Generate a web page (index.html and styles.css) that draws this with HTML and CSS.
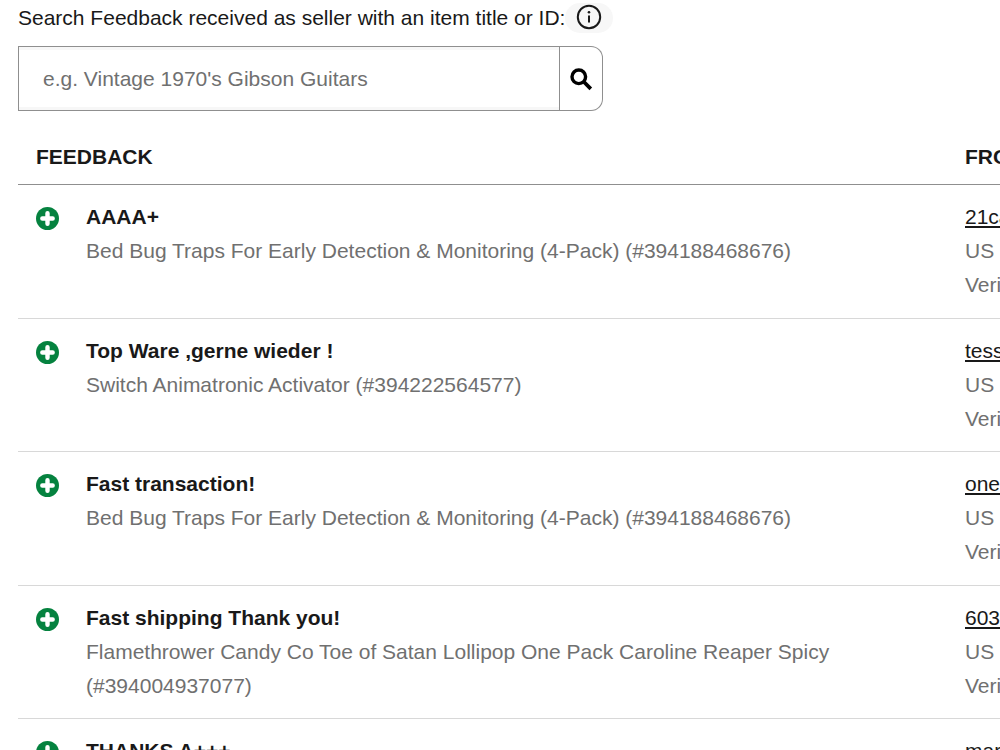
FILE: index.html
```html
<!DOCTYPE html>
<html lang="en">
<head>
    <meta charset="UTF-8">
    <meta name="viewport" content="width=device-width, initial-scale=1.0">
    <title>Feedback profile</title>
    <link rel="stylesheet" href="styles.css">
</head>
<body>

<svg class="sprite" aria-hidden="true">
    <symbol id="icon-positive" viewBox="0 0 24 24">
        <circle cx="12" cy="12" r="12" fill="#05823f"/>
        <path d="M12 6.6v10.8M6.6 12h10.8" stroke="#fff" stroke-width="4.6" stroke-linecap="round"/>
    </symbol>
</svg>

<form class="search">
    <div class="search-label">
        <label for="search-input">Search Feedback received as seller with an item title or ID:</label>
        <button class="info-btn" type="button" aria-label="Help">
            <svg width="26" height="26" viewBox="0 0 26 26" fill="none" stroke="#191919">
                <circle cx="13" cy="13" r="11.2" stroke-width="2"/>
                <path d="M13 11.5v7" stroke-width="2"/>
                <circle cx="13" cy="8.2" r="1.3" fill="#191919" stroke="none"/>
            </svg>
        </button>
    </div>
    <div class="search-box">
        <input class="search-input" id="search-input" type="text" placeholder="e.g. Vintage 1970's Gibson Guitars">
        <button class="search-btn" type="submit" aria-label="Search">
            <svg width="24" height="24" viewBox="0 0 24 24" fill="none" stroke="#000">
                <circle cx="9.8" cy="9.8" r="6.8" stroke-width="3.4"/>
                <path d="M15 15l6.8 6.8" stroke-width="3.8"/>
            </svg>
        </button>
    </div>
</form>

<div class="table-wrap">
    <table class="feedback-table">
        <thead>
            <tr>
                <th class="col-feedback" scope="col">FEEDBACK</th>
                <th class="col-from" scope="col">FROM</th>
            </tr>
        </thead>
        <tbody>
            <tr>
                <td>
                    <div class="card">
                        <svg class="rating" role="img" aria-label="Positive feedback"><use href="#icon-positive"/></svg>
                        <div class="card-text">
                            <div class="comment">AAAA+</div>
                            <div class="item">Bed Bug Traps For Early Detection &amp; Monitoring (4-Pack) (#394188468676)</div>
                        </div>
                    </div>
                </td>
                <td>
                    <a class="user" href="#">21ca</a>
                    <div class="item">US</div>
                    <div class="item">Verified</div>
                </td>
            </tr>
            <tr>
                <td>
                    <div class="card">
                        <svg class="rating" role="img" aria-label="Positive feedback"><use href="#icon-positive"/></svg>
                        <div class="card-text">
                            <div class="comment">Top Ware ,gerne wieder !</div>
                            <div class="item">Switch Animatronic Activator (#394222564577)</div>
                        </div>
                    </div>
                </td>
                <td>
                    <a class="user" href="#">tess</a>
                    <div class="item">US</div>
                    <div class="item">Verified</div>
                </td>
            </tr>
            <tr>
                <td>
                    <div class="card">
                        <svg class="rating" role="img" aria-label="Positive feedback"><use href="#icon-positive"/></svg>
                        <div class="card-text">
                            <div class="comment">Fast transaction!</div>
                            <div class="item">Bed Bug Traps For Early Detection &amp; Monitoring (4-Pack) (#394188468676)</div>
                        </div>
                    </div>
                </td>
                <td>
                    <a class="user" href="#">one</a>
                    <div class="item">US</div>
                    <div class="item">Verified</div>
                </td>
            </tr>
            <tr>
                <td>
                    <div class="card">
                        <svg class="rating" role="img" aria-label="Positive feedback"><use href="#icon-positive"/></svg>
                        <div class="card-text">
                            <div class="comment">Fast shipping Thank you!</div>
                            <div class="item">Flamethrower Candy Co Toe of Satan Lollipop One Pack Caroline Reaper Spicy (#394004937077)</div>
                        </div>
                    </div>
                </td>
                <td>
                    <a class="user" href="#">603</a>
                    <div class="item">US</div>
                    <div class="item">Verified</div>
                </td>
            </tr>
            <tr>
                <td>
                    <div class="card">
                        <svg class="rating" role="img" aria-label="Positive feedback"><use href="#icon-positive"/></svg>
                        <div class="card-text">
                            <div class="comment">THANKS A+++</div>
                        </div>
                    </div>
                </td>
                <td>
                    <a class="user" href="#">mar</a>
                    <div class="item">US</div>
                    <div class="item">Verified</div>
                </td>
            </tr>
        </tbody>
    </table>
</div>

</body>
</html>
```
FILE: styles.css
```css
body { margin: 0 0 0 18px; overflow: hidden; background-color: #fff; color: #191919; font-family: "Liberation Sans", Arial, sans-serif; font-size: 21px; line-height: 34px; }
.sprite { position: absolute; width: 0; height: 0; }
.search { max-width: 600px; }
.search-label { display: flex; align-items: center; height: 36px; white-space: nowrap; }
.info-btn { display: flex; align-items: center; justify-content: center; width: 48px; height: 30px; padding: 0 0 2px; border: 0; border-radius: 15px; background-color: #f7f7f7; }
.search-box { display: flex; max-width: 585px; height: 65px; margin-top: 10px; }
.search-input { flex: 1; min-width: 0; box-sizing: border-box; padding: 0 24px; border: 1px solid #8f8f8f; border-radius: 0; background-color: #fff; box-shadow: inset 0 3px 0 #f7f7f7, inset 0 -3px 0 #f7f7f7; color: #191919; font: inherit; }
.search-input::placeholder { color: #707070; opacity: 1; }
.search-btn { display: flex; align-items: center; justify-content: center; width: 43px; padding: 0; border: 1px solid #8f8f8f; border-left: 0; border-radius: 0 12px 12px 0; background-color: #fff; }
.table-wrap { margin-top: 18px; overflow: hidden; }
.feedback-table { width: 100%; min-width: 1120px; table-layout: fixed; border-collapse: separate; border-spacing: 0; }
.col-from { width: 155px; }
.feedback-table th { padding: 11px 18px 10px; border-bottom: 1px solid #8f8f8f; text-align: left; font-weight: bold; }
.feedback-table td { height: 102px; padding: 15px 18px; border-bottom: 1px solid #d8d8d8; vertical-align: top; }
.feedback-table tr:nth-child(odd) td { padding-bottom: 16px; }
.card { display: flex; gap: 27px; }
.rating { flex: none; width: 23px; height: 23px; margin-top: 7px; }
.comment { font-weight: bold; }
.item { color: #707070; }
.user { display: block; width: max-content; color: #191919; text-decoration: underline; text-decoration-thickness: 2px; text-underline-offset: 2px; }
```
